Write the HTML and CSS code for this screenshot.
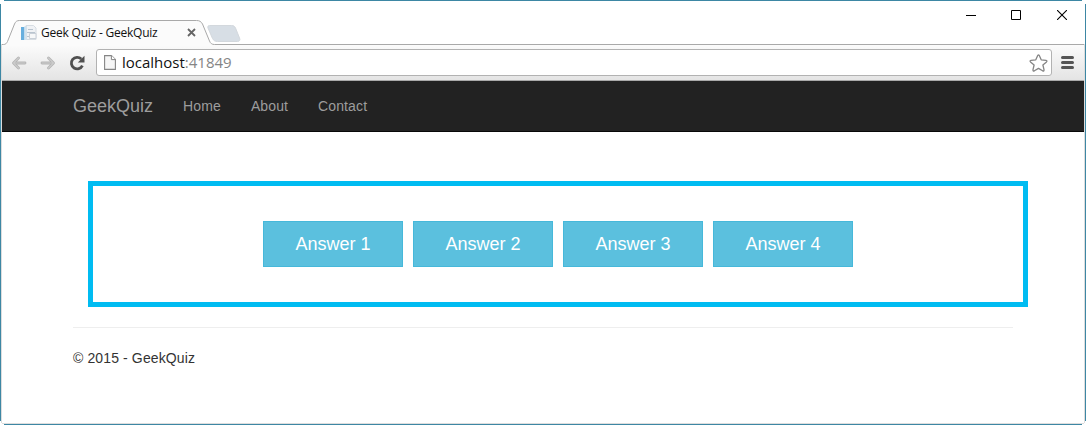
FILE: index.html
```html
<!DOCTYPE html>
<html lang="en">
<head>
<meta charset="utf-8">
<title>Geek Quiz - GeekQuiz</title>
<link rel="stylesheet" href="styles.css">
</head>
<body>
<div class="window">
  <header class="titlebar">
    <div class="tabstrip">
      <svg class="tab-shape" width="1082" height="26" viewBox="1.500 0 1082 26">
        <path d="M0 24.500H3C5 24.500 6 23.500 7 21.500L14 4C15 1.500 16.500 .5 19 .5H196C199 .5 200.500 1.500 202 4L209 21C210 23.500 211.500 24.500 214 24.500H1084V26H0Z" fill="#fbfbfb"/>
        <path d="M0 24.500H3C5 24.500 6 23.500 7 21.500L14 4C15 1.500 16.500 .5 19 .5H196C199 .5 200.500 1.500 202 4L209 21C210 23.500 211.500 24.500 214 24.500H1084" fill="none" stroke="#a9a9a9"/>
        <path d="M209 5.500H231C233 5.500 234 6 235 8L239 18C240 20 239 21.500 237 21.500H217C214.500 21.500 213 20.500 212 18.500L207.500 8C207 6.500 207.500 5.500 209 5.500Z" fill="#d7dee5" stroke="#d3d8dd"/>
      </svg>
      <div class="tab">
        <svg class="favicon" width="16" height="16" viewBox="0 0 16 16">
          <path d="M5 .5H12.500L15 3V14.500H5Z" fill="#f0f2f5" stroke="#d6dce2"/>
          <path d="M0 2H3.500V15H0Z" fill="#66aede"/>
          <path d="M3.500 1H6V15H3.500Z" fill="#d2e1ec"/>
          <path d="M7 4.500H12M6 7.500H14M6 11.500H8" stroke="#b9c4cf"/>
          <path d="M8.500 8.500H15V13.500H8.500Z" fill="#f7f8f9" stroke="#c9d0d8"/>
        </svg>
        <span class="tab-title">Geek Quiz - GeekQuiz</span>
        <svg class="tab-close" width="9" height="9" viewBox="0 0 9 9"><path d="M1 1L8 8M8 1L1 8" stroke="#656565" stroke-width="1.800"/></svg>
      </div>
    </div>
    <div class="controls">
      <svg class="minimize" width="10" height="10" viewBox="0 0 10 10"><path d="M0 5.500H10" stroke="#000"/></svg>
      <svg class="maximize" width="10" height="10" viewBox="0 0 10 10"><path d="M.5 .5H9.500V9.500H.5Z" fill="none" stroke="#000"/></svg>
      <svg width="10" height="10" viewBox="0 0 10 10"><path d="M0 0L10 10M10 0L0 10" stroke="#000" stroke-width="1.100"/></svg>
    </div>
  </header>
  <div class="toolbar">
    <svg class="arrow" width="16" height="14" viewBox="0 0 16 14"><path d="M7.500 2L2.500 7L7.500 12M3 7H14" fill="none" stroke="#b4b4b4" stroke-width="2.800" stroke-linecap="round" stroke-linejoin="round"/><path d="M7.500 2L2.500 7L7.500 12M3 7H14" fill="none" stroke="#cbcbcb" stroke-width="1.200" stroke-linecap="round"/></svg>
    <svg class="arrow" width="16" height="14" viewBox="0 0 16 14"><path d="M8.500 2L13.500 7L8.500 12M13 7H2" fill="none" stroke="#b4b4b4" stroke-width="2.800" stroke-linecap="round" stroke-linejoin="round"/><path d="M8.500 2L13.500 7L8.500 12M13 7H2" fill="none" stroke="#cbcbcb" stroke-width="1.200" stroke-linecap="round"/></svg>
    <svg class="reload" width="16" height="16" viewBox="0 0 16 16"><path d="M12.300 4A5.800 5.800 0 1 0 13.400 10.600" fill="none" stroke="#505050" stroke-width="2.800"/><path d="M15.500 .8V7.400H8.800Z" fill="#505050"/></svg>
    <div class="omnibox">
      <svg class="page-icon" width="12" height="15" viewBox="0 0 12 15"><path d="M.6 .6H7.400L11.400 4.600V14.400H.6Z" fill="#f6f6f6" stroke="#858585" stroke-width="1.100"/><path d="M7.400 .6V4.600H11.400" fill="#fff" stroke="#858585"/></svg>
      <span class="url"><span class="host">localhost</span>:41849</span>
      <svg class="star" width="19" height="18" viewBox="0 0 19 18"><path d="M8.700 1.600Q9.500 .2 10.300 1.600L12.200 5.800L17 6.300Q18.600 6.700 17.500 7.900L13.900 11L15 15.700Q15.200 17.500 13.600 16.800L9.500 14.400L5.400 16.800Q3.800 17.500 4 15.700L5.100 11L1.500 7.900Q.4 6.700 2 6.300L6.800 5.800Z" fill="#fff" stroke="#858585" stroke-width="1.300" stroke-linejoin="round"/></svg>
    </div>
    <svg class="menu" width="13" height="13" viewBox="0 0 13 13"><path d="M1.500 1.500H11.500M1.500 6.500H11.500M1.500 11.500H11.500" stroke="#555" stroke-width="3" stroke-linecap="round"/></svg>
  </div>
  <nav class="navbar">
    <a class="brand">GeekQuiz</a>
    <a class="nav-link">Home</a>
    <a class="nav-link">About</a>
    <a class="nav-link">Contact</a>
  </nav>
  <main class="content">
    <section class="answers">
      <button class="answer">Answer 1</button>
      <button class="answer">Answer 2</button>
      <button class="answer">Answer 3</button>
      <button class="answer">Answer 4</button>
    </section>
    <footer class="footer">© 2015 - GeekQuiz</footer>
  </main>
</div>
</body>
</html>
```
FILE: styles.css
```css
* { box-sizing: border-box; }
body {
  margin: 0;
  font-family: "Liberation Sans", Arial, sans-serif;
  font-size: 14px;
  color: #333;
  background: #fff;
}
.window {
  width: 1086px;
  height: 425px;
  padding: 1px 2px 2px;
  overflow: hidden;
  background:
    linear-gradient(#3d87a4, #3d87a4) 4px 0 / 1078px 1px no-repeat,
    linear-gradient(#3d87a4, #3d87a4) 4px 424px / 1078px 1px no-repeat,
    linear-gradient(#3d87a4, #3d87a4) 0 4px / 1px 417px no-repeat,
    linear-gradient(#3d87a4, #3d87a4) 1085px 4px / 1px 417px no-repeat,
    linear-gradient(#ddd, #ddd) 2px 423px / 1082px 1px no-repeat,
    linear-gradient(#ddd, #ddd) 1px 44px / 1px 379px no-repeat,
    linear-gradient(#ddd, #ddd) 1084px 44px / 1px 379px no-repeat,
    #fff;
}
.titlebar {
  position: relative;
  height: 43px;
  padding-top: 19px;
}
.tabstrip {
  position: relative;
  height: 25px;
}
.tab-shape {
  position: absolute;
  left: 0;
  top: 0;
  display: block;
}
.tab {
  position: relative;
  display: flex;
  align-items: center;
  width: 212px;
  height: 25px;
  padding-left: 19px;
}
.favicon { margin-right: 4px; }
.tab-title {
  width: 146px;
  font: 12px/16px "Open Sans", "Noto Sans", sans-serif;
  letter-spacing: -0.22px;
  color: #111;
  white-space: nowrap;
}
.controls {
  position: absolute;
  right: 17px;
  top: 9px;
  display: flex;
}
.minimize { margin-right: 35px; }
.maximize { margin-right: 36px; }
.toolbar {
  display: flex;
  align-items: center;
  height: 37px;
  padding: 0 10px 0 9px;
  background: linear-gradient(#fbfbfb, #e4e4e4);
  border-top: 1px solid transparent;
  background-clip: padding-box;
  border-bottom: 1px solid #aaa;
}
.arrow { margin-right: 13px; }
.reload { margin-right: 11px; }
.omnibox {
  display: flex;
  align-items: center;
  width: 956px;
  height: 27px;
  padding: 0 3px 0 7px;
  border: 1px solid #b2b2b2;
  border-radius: 3px;
  background: #fff;
}
.url {
  flex: 1;
  margin: 0 0 2px 6px;
  font: 15px/22px "Open Sans", "Noto Sans", sans-serif;
  color: #858585;
}
.host { color: #111; }
.menu { margin-left: 9px; }
.navbar {
  display: flex;
  align-items: center;
  gap: 30px;
  height: 51px;
  padding-left: 71px;
  background: #222;
  border-bottom: 1px solid #080808;
  color: #9d9d9d;
}
.brand { font-size: 18px; }
.nav-link { letter-spacing: 0.12px; }
.content {
  width: 1011px;
  padding: 49px 0 0 71px;
}
.answers {
  display: flex;
  justify-content: center;
  align-items: center;
  gap: 10px;
  width: 940px;
  height: 126px;
  margin-left: 15px;
  border: 5px solid #00bcf2;
}
.answer {
  width: 140px;
  height: 46px;
  padding: 0;
  border: 1px solid #46b8da;
  background: #5bc0de;
  color: #fff;
  font: 18px/24px "Liberation Sans", Arial, sans-serif;
}
.footer {
  margin-top: 20px;
  padding-top: 20px;
  border-top: 1px solid #eee;
  line-height: 20px;
  letter-spacing: 0.12px;
}
```
